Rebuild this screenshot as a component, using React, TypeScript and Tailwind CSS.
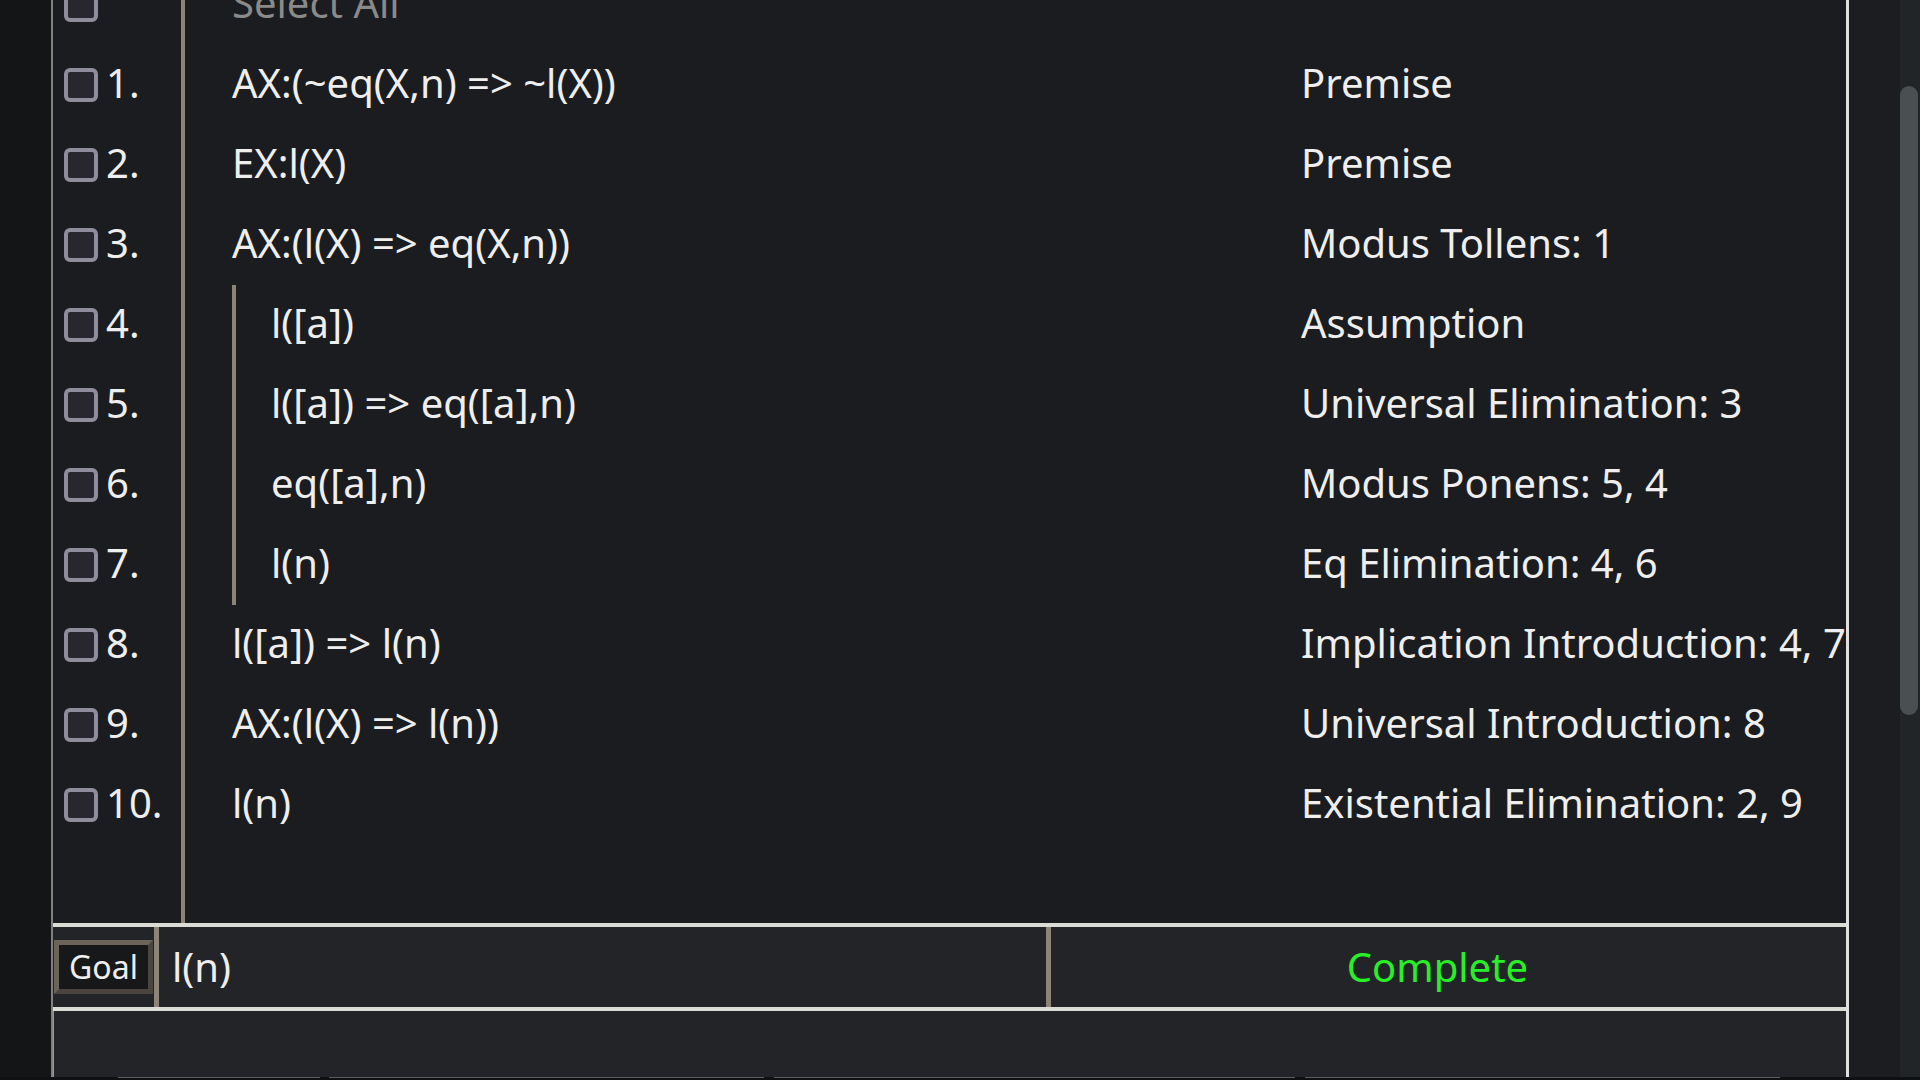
import React from 'react';

type Line = {
  num: string;
  formula: string;
  rule: string;
  nested?: boolean;
};

const lines: Line[] = [
  { num: '1.', formula: 'AX:(~eq(X,n) => ~l(X))', rule: 'Premise' },
  { num: '2.', formula: 'EX:l(X)', rule: 'Premise' },
  { num: '3.', formula: 'AX:(l(X) => eq(X,n))', rule: 'Modus Tollens: 1' },
  { num: '4.', formula: 'l([a])', rule: 'Assumption', nested: true },
  { num: '5.', formula: 'l([a]) => eq([a],n)', rule: 'Universal Elimination: 3', nested: true },
  { num: '6.', formula: 'eq([a],n)', rule: 'Modus Ponens: 5, 4', nested: true },
  { num: '7.', formula: 'l(n)', rule: 'Eq Elimination: 4, 6', nested: true },
  { num: '8.', formula: 'l([a]) => l(n)', rule: 'Implication Introduction: 4, 7' },
  { num: '9.', formula: 'AX:(l(X) => l(n))', rule: 'Universal Introduction: 8' },
  { num: '10.', formula: 'l(n)', rule: 'Existential Elimination: 2, 9' },
];

const Checkbox: React.FC = () => (
  <div className="w-[34px] h-[34px] shrink-0 rounded-[6px] border-4 border-[#8f8c9b] bg-[#28262f]" />
);

const ProofRow: React.FC<{ line: Line }> = ({ line }) => (
  <div className="flex h-[80px] shrink-0">
    <div className="flex items-center w-[128px] pl-[11px]">
      <Checkbox />
      <span className="ml-[8px] pb-1 text-[#eeeeee]">{line.num}</span>
    </div>
    <div className="flex w-[1120px] border-l-4 border-[#8b8477] pl-[47px]">
      {line.nested ? (
        <div className="flex items-center border-l-4 border-[#8b8477] pl-[35px]">
          <span className="pb-1 text-[#eeeeee] whitespace-nowrap">{line.formula}</span>
        </div>
      ) : (
        <div className="flex items-center">
          <span className="pb-1 text-[#eeeeee] whitespace-nowrap">{line.formula}</span>
        </div>
      )}
    </div>
    <div className="flex items-center flex-1 min-w-0 overflow-hidden">
      <span className="pb-1 text-[#eeeeee] whitespace-nowrap">{line.rule}</span>
    </div>
  </div>
);

const App: React.FC = () => {
  return (
    <div
      className="w-[1920px] h-[1080px] flex flex-col overflow-hidden bg-[#141517] text-[40px]"
      style={{ fontFamily: '"Noto Sans", "Open Sans", sans-serif' }}
    >
      <div className="flex h-[1077px]">
        {/* left gutter */}
        <div className="w-[51px] shrink-0 bg-[#141517]" />

        {/* proof panel */}
        <div className="flex flex-col w-[1798px] shrink-0 border-l-2 border-[#808080] border-r-[3px] border-r-[#e0e0e0]">
          {/* proof lines */}
          <div className="h-[923px] shrink-0 flex flex-col overflow-hidden bg-[#1b1c1f]">
            <div className="flex flex-col -mt-[35px] h-[958px]">
              <div className="flex h-[80px] shrink-0">
                <div className="flex items-center w-[128px] pl-[11px]">
                  <Checkbox />
                </div>
                <div className="flex items-center w-[1120px] border-l-4 border-[#8b8477] pl-[47px]">
                  <span className="pb-1 text-[#8a8a8a]">Select All</span>
                </div>
              </div>
              {lines.map((line) => (
                <ProofRow key={line.num} line={line} />
              ))}
              <div className="flex flex-1">
                <div className="w-[128px]" />
                <div className="w-[1120px] border-l-4 border-[#8b8477]" />
              </div>
            </div>
          </div>

          <div className="h-[4px] shrink-0 bg-[#dcdcd6]" />

          {/* goal bar */}
          <div className="flex h-[80px] shrink-0 bg-[#232427]">
            <div className="flex items-center w-[101px] pl-px">
              <div className="flex items-center justify-center w-[99px] h-[54px] border-[5px] border-t-[#6b6458] border-l-[#6b6458] border-b-[#4a453e] border-r-[#4a453e] bg-[#17181a]">
                <span className="text-[32px] text-[#eeeeee]">Goal</span>
              </div>
            </div>
            <div className="w-[5px] bg-[#8b8477]" />
            <div className="flex items-center w-[887px] pl-[13px]">
              <span className="text-[#eeeeee]">l(n)</span>
            </div>
            <div className="w-[5px] bg-[#8b8477]" />
            <div className="flex items-center justify-center flex-1 pr-[22px]">
              <span className="text-[#28f028]">Complete</span>
            </div>
          </div>

          <div className="h-[4px] shrink-0 bg-[#dcdcd6]" />

          <div className="flex-1 bg-[#232427] border-l border-[#9a9a9a]" />
        </div>

        {/* right side + scrollbar */}
        <div className="w-[51px] shrink-0 bg-[#1c1d20]" />
        <div className="w-[20px] shrink-0 bg-[#222527] pt-[86px]">
          <div className="w-[18px] h-[629px] rounded-full bg-[#4a4f52]" />
        </div>
      </div>

      {/* bottom strip */}
      <div className="flex h-[3px] shrink-0 bg-[#0f1011]">
        <div className="ml-[118px] w-[202px] h-px bg-[#5c5c5c]" />
        <div className="ml-[9px] w-[435px] h-px bg-[#5c5c5c]" />
        <div className="ml-[10px] w-[521px] h-px bg-[#5c5c5c]" />
        <div className="ml-[10px] w-[475px] h-px bg-[#5c5c5c]" />
      </div>
    </div>
  );
};

export default App;
